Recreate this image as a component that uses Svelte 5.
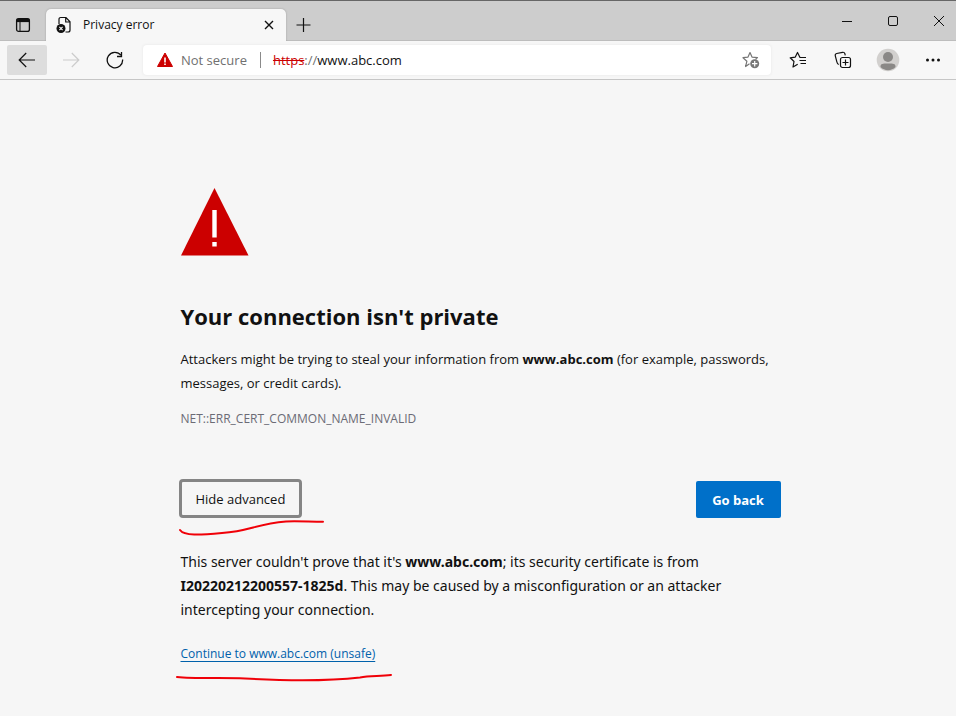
<script>
  let advanced = $state(true);
  let address = $state('www.abc.com');
</script>

<div class="browser">
  <header class="tabstrip">
    <button class="tabmenu" aria-label="Tab actions menu">
      <svg width="16" height="16" viewBox="0 0 16 16" fill="none" stroke="#111" stroke-width="1.3">
        <rect x="1.6" y="1.6" width="12.8" height="12.8" rx="2" />
        <path d="M1.6 3.4h12.8" stroke-width="3.4" />
        <path d="M5 5v9" stroke-width="1" />
      </svg>
    </button>
    <div class="tab">
      <svg class="page" width="16" height="18" viewBox="0 0 16 18">
        <path d="M3 8V3.2C3 2 3.7 1.5 4.8 1.5H10l4 4.3V14c0 1.400-.6 2-1.900 2H9.500M9.700 1.700V6h4.200" fill="none" stroke="#111" stroke-width="1.200" />
        <circle cx="5" cy="12.500" r="4.500" fill="#111" />
        <path d="M3.400 10.900l3.200 3.200m0-3.200l-3.200 3.200" stroke="#f7f7f7" stroke-width="1.200" />
      </svg>
      <span class="title">Privacy error</span>
      <button class="close" aria-label="Close tab">
        <svg width="10" height="10" viewBox="0 0 10 10"><path d="M1 1l8 8M9 1L1 9" stroke="#111" stroke-width="1.400" /></svg>
      </button>
    </div>
    <button class="newtab" aria-label="New tab">
      <svg width="16" height="16" viewBox="0 0 16 16"><path d="M8.500 1v14M1.500 8h14" stroke="#111" stroke-width="1.200" /></svg>
    </button>
    <div class="windowbuttons">
      <button aria-label="Minimize"><svg width="12" height="12" viewBox="0 0 12 12"><path d="M1 6.500h10" stroke="#111" /></svg></button>
      <button aria-label="Maximize"><svg width="12" height="12" viewBox="0 0 12 12"><rect x="1.500" y="1.500" width="9" height="9" rx="1.500" fill="none" stroke="#111" /></svg></button>
      <button aria-label="Close"><svg width="12" height="12" viewBox="0 0 12 12"><path d="M1 1l10 10M11 1L1 11" stroke="#111" /></svg></button>
    </div>
  </header>

  <nav class="toolbar">
    <button class="tool active" aria-label="Back">
      <svg width="18" height="18" viewBox="0 0 18 18" fill="none" stroke="#111" stroke-width="1.200"><path d="M17 9H1.500M8.200 2L1.200 9l7 7" /></svg>
    </button>
    <button class="tool" aria-label="Forward" disabled>
      <svg width="18" height="18" viewBox="0 0 18 18" fill="none" stroke="#ccc" stroke-width="1.200"><path d="M1 9h15.500M9.800 2l7 7-7 7" /></svg>
    </button>
    <button class="tool" aria-label="Refresh">
      <svg width="18" height="18" viewBox="0 0 18 18" fill="none" stroke="#111" stroke-width="1.300"><path d="M16.600 8.500A7.700 7.700 0 1 1 14.900 4.200M15.500 1v4.500H11" /></svg>
    </button>
    <div class="addressbar">
      <svg width="16" height="16" viewBox="0 0 16 16">
        <path d="M8 1l7.500 13.500H.5z" fill="#c00" stroke="#c00" stroke-linejoin="round" />
        <path d="M7.200 5.500h1.600v5H7.200zM7.200 11.500h1.600V13H7.200z" fill="#fff" />
      </svg>
      <span class="status">Not secure</span>
      <span class="divider"></span>
      <label class="scheme" for="address"><s>https</s>://</label>
      <input id="address" type="text" aria-label="Address" bind:value={address} />
      <button class="favorite" aria-label="Add this page to favorites">
        <svg width="18" height="18" viewBox="0 0 18 18">
          <path d="M7.500 12.700L3.600 15.500 4.900 10.200 1 6.700l5-.6 2-4.600 2 4.600 5.500.5-2 1.800" fill="none" stroke="#767676" stroke-width="1.200" stroke-linejoin="round" />
          <circle cx="12.700" cy="12.700" r="4.500" fill="#767676" />
          <path d="M12.700 10v5.400M10 12.700h5.400" stroke="#fff" stroke-width="1.200" />
        </svg>
      </button>
    </div>
    <div class="actions">
      <button aria-label="Favorites">
        <svg width="18" height="18" viewBox="0 0 18 18" fill="none" stroke="#111" stroke-width="1.200" stroke-linejoin="round">
          <path d="M17 6.500h-6L8.500 1.500 6.300 6.100 1.200 6.800 5 10.500l-1 5.500 4.700-2.800M10.500 9.500H17M11.500 12.500H17" />
        </svg>
      </button>
      <button aria-label="Collections">
        <svg width="18" height="18" viewBox="0 0 18 18" fill="none" stroke="#111" stroke-width="1.200">
          <rect x="6.500" y="6.500" width="10" height="10" rx="2" />
          <path d="M11.500 8.500v6M8.500 11.500h6M4.800 13.500C3 13 3 11.500 2.600 9.900L1.300 4.800C1 3.500 1.500 2.800 2.700 2.500L8.500 1.300c1.400-.3 2 .2 2.400 1.500l.4 1.600" />
        </svg>
      </button>
      <button aria-label="Profile">
        <svg width="24" height="24" viewBox="0 0 24 24">
          <circle cx="12" cy="12" r="11.300" fill="#d2d0ce" />
          <circle cx="12" cy="9" r="5" fill="#8a8886" />
          <path d="M4.500 19C4.500 15.500 6.500 15.500 12 15.500s7.500 0 7.500 3.500a10.500 10.500 0 0 1-15 0z" fill="#8a8886" />
        </svg>
      </button>
      <button aria-label="Settings and more">
        <svg width="16" height="16" viewBox="0 0 16 16" fill="#111"><circle cx="2.500" cy="8" r="1.500" /><circle cx="8" cy="8" r="1.500" /><circle cx="13.500" cy="8" r="1.500" /></svg>
      </button>
    </div>
  </nav>

  <main>
    <svg class="warning" width="68" height="68" viewBox="0 0 68 68" aria-hidden="true">
      <path d="M33.500 0L67.500 67.500H0z" fill="#c00" />
      <path d="M31.300 22h4.400v27.500h-4.400zM31.300 54h4.400v4.500h-4.400z" fill="#fff" />
    </svg>
    <h1>Your connection isn't private</h1>
    <p class="lead">Attackers might be trying to steal your information from <strong>www.abc.com</strong> (for example, passwords, messages, or credit cards).</p>
    <p class="code">NET::ERR_CERT_COMMON_NAME_INVALID</p>
    <div class="controls">
      <div class="marked">
        <button class="details" onclick={() => (advanced = !advanced)}>{advanced ? 'Hide advanced' : 'Advanced'}</button>
        <svg class="stroke" width="148" height="18" viewBox="0 0 148 18">
          <path d="M3 12C7 18 23 17 45 15 73 13 79 6 109 3.500 121 3 133 3.800 146 3.800" />
        </svg>
      </div>
      <button class="goback">Go back</button>
    </div>
    {#if advanced}
      <p class="explain">This server couldn't prove that it's <strong>www.abc.com</strong>; its security certificate is from <strong>I20220212200557-1825d</strong>. This may be caused by a misconfiguration or an attacker intercepting your connection.</p>
      <div class="marked proceed">
        <a href="#proceed">Continue to www.abc.com (unsafe)</a>
        <svg class="stroke" width="218" height="10" viewBox="0 0 218 10">
          <path d="M2 4C20 6 46 4.500 70 5.500 105 7.500 150 8.500 185 4.500 195 2.500 205 3.500 216 2" />
        </svg>
      </div>
    {/if}
  </main>
</div>

<style>
  :global(body) { margin: 0; background: #f6f6f6; }
  .browser { font-family: "Open Sans", "Noto Sans", sans-serif; color: #111; font-size: 13px; }
  button { font: inherit; color: inherit; border: 0; padding: 0; background: none; display: flex; align-items: center; justify-content: center; }
  svg { flex: none; display: block; }
  .tabstrip { display: flex; height: 32px; padding-top: 8px; background: #cdcdcd; border-top: 1px solid #666; box-shadow: inset 0 -1px #bdbdbd; }
  .tabmenu { width: 46px; }
  .tab { display: flex; align-items: center; box-sizing: border-box; width: 240px; padding: 0 10px; background: #f7f7f7; border-radius: 5px 5px 0 0; box-shadow: 0 0 2px #999; clip-path: inset(-3px -3px 0); }
  .title { flex: 1; margin-left: 11px; font-size: 12px; line-height: 16px; }
  .close { width: 14px; height: 20px; }
  .newtab { width: 34px; }
  .windowbuttons { display: flex; margin: -8px -6px 0 auto; }
  .windowbuttons button { width: 46px; }
  .toolbar { display: flex; align-items: center; height: 38px; padding-left: 7px; background: #f7f7f7; border-bottom: 1px solid #c6c6c6; }
  .tool { width: 40px; height: 30px; margin-right: 4px; border-radius: 2px; }
  .active { background: #ddd; }
  .addressbar { display: flex; flex: 1; align-items: center; min-width: 0; box-sizing: border-box; height: 30px; margin-left: 4px; padding: 0 10px 0 14px; background: #fff; border-radius: 4px; box-shadow: 0 0 3px #e4e4e4; }
  .status { margin-left: 8px; color: #707070; white-space: nowrap; }
  .divider { width: 1px; height: 16px; margin: 0 12px 0 13px; background: #8a8a8a; }
  .scheme { color: #707070; }
  .scheme s { color: #c00; }
  input { flex: 1; min-width: 0; border: 0; padding: 0; outline: 0; background: none; font: inherit; color: #111; }
  .favorite { width: 20px; height: 24px; }
  .actions { display: flex; margin-left: 4px; padding-right: 1px; }
  .actions button { width: 45px; height: 30px; }
  main { max-width: 600px; margin: 0 auto; padding: 108px 16px 32px 21px; }
  h1 { margin: 43px 0 14px; font-size: 22px; line-height: 34px; font-weight: 700; }
  p { margin: 0; line-height: 24px; }
  .code { margin-top: 12px; font-size: 12px; color: #6b6b75; }
  .controls { display: flex; justify-content: space-between; align-items: flex-end; margin: 48px 0 32px -2px; }
  .marked { position: relative; }
  .details { height: 39px; padding: 0 14px; border: 3px solid #858585; border-radius: 4px; }
  .goback { width: 85px; height: 37px; background: #0070c9; border-radius: 2px; color: #fff; font-weight: 700; }
  .explain { font-family: "Noto Sans", "Open Sans", sans-serif; font-size: 14px; }
  .proceed { width: fit-content; margin-top: 20px; font-size: 12px; line-height: 24px; }
  a { color: #0061ab; text-underline-offset: 3px; }
  .stroke { position: absolute; top: 100%; left: -2px; fill: none; stroke: #f00008; stroke-width: 2; stroke-linecap: round; pointer-events: none; }
  .proceed .stroke { margin-top: 7px; left: -6px; }
</style>
